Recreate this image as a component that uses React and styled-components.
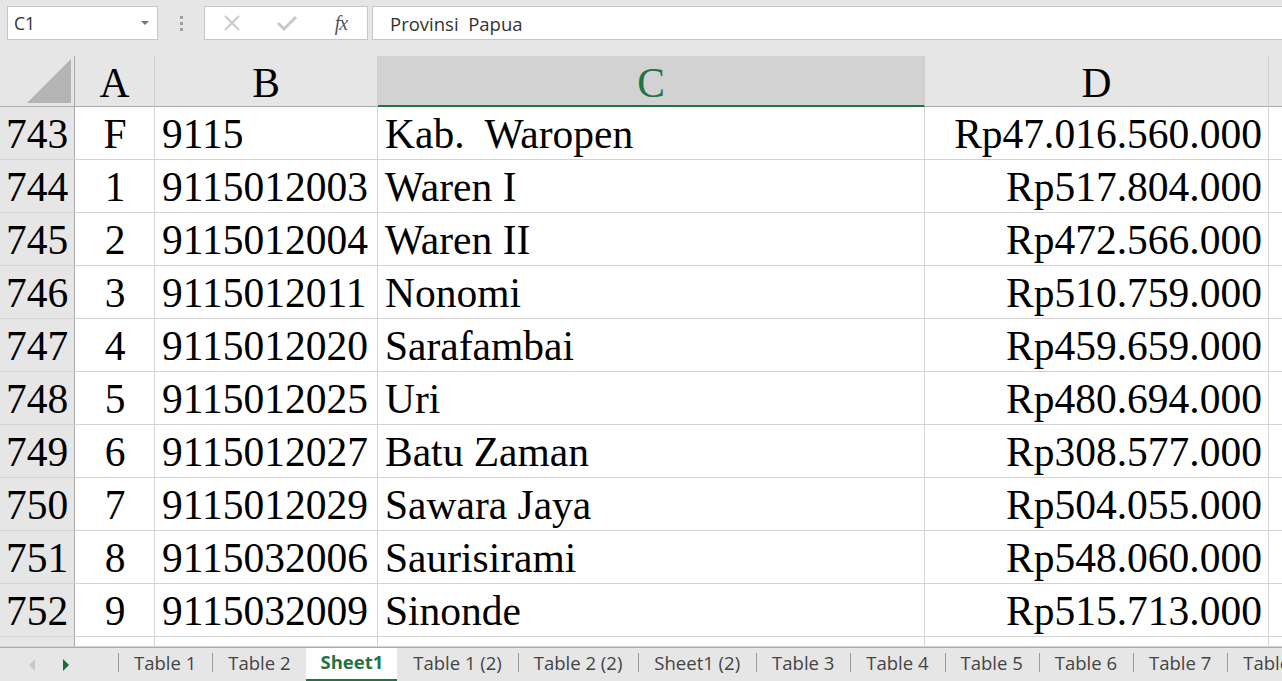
import React from "react";
import styled, { createGlobalStyle } from "styled-components";

const rows = [
  ["743", "F", "9115", "Kab.  Waropen", "Rp47.016.560.000"],
  ["744", "1", "9115012003", "Waren I", "Rp517.804.000"],
  ["745", "2", "9115012004", "Waren II", "Rp472.566.000"],
  ["746", "3", "9115012011", "Nonomi", "Rp510.759.000"],
  ["747", "4", "9115012020", "Sarafambai", "Rp459.659.000"],
  ["748", "5", "9115012025", "Uri", "Rp480.694.000"],
  ["749", "6", "9115012027", "Batu Zaman", "Rp308.577.000"],
  ["750", "7", "9115012029", "Sawara Jaya", "Rp504.055.000"],
  ["751", "8", "9115032006", "Saurisirami", "Rp548.060.000"],
  ["752", "9", "9115032009", "Sinonde", "Rp515.713.000"],
];

const tabs = [
  "Table 1",
  "Table 2",
  "Sheet1",
  "Table 1 (2)",
  "Table 2 (2)",
  "Sheet1 (2)",
  "Table 3",
  "Table 4",
  "Table 5",
  "Table 6",
  "Table 7",
  "Table 8",
];

const GlobalStyle = createGlobalStyle`
  html, body {
    margin: 0;
    padding: 0;
    background: #e6e6e6;
    overflow: hidden;
  }
`;

const Window = styled.div`
  width: 1282px;
  height: 681px;
  display: flex;
  flex-direction: column;
  background: #e6e6e6;
  overflow: hidden;
`;

const FormulaBar = styled.div`
  height: 56px;
  display: flex;
  align-items: flex-start;
  padding: 6px 0 0 7px;
  box-sizing: border-box;
  font-family: "Open Sans", "Noto Sans", sans-serif;
`;

const NameBox = styled.div`
  width: 151px;
  height: 34px;
  box-sizing: border-box;
  background: #fff;
  border: 1px solid #c6c6c6;
  display: flex;
  align-items: center;
  justify-content: space-between;
  padding: 0 8px 0 6px;
  font-size: 17.5px;
  color: #333;
`;

const Caret = styled.span`
  width: 0;
  height: 0;
  border-left: 4px solid transparent;
  border-right: 4px solid transparent;
  border-top: 4px solid #777;
`;

const Grip = styled.div`
  width: 46px;
  height: 34px;
  display: flex;
  flex-direction: column;
  align-items: center;
  justify-content: center;
  gap: 3px;
  & span {
    width: 3px;
    height: 3px;
    background: #a0a0a0;
  }
`;

const IconBox = styled.div`
  width: 164px;
  height: 34px;
  box-sizing: border-box;
  background: #fff;
  border: 1px solid #c6c6c6;
  display: flex;
  align-items: center;
  padding: 0 0 0 16px;
`;

const IconSlot = styled.div`
  width: ${(p) => p.$w}px;
  display: flex;
  align-items: center;
  justify-content: center;
`;

const Fx = styled.span`
  font-family: "Liberation Serif", serif;
  font-style: italic;
  font-size: 20px;
  color: #555;
  letter-spacing: -1px;
`;

const FormulaInput = styled.div`
  flex: 1;
  margin-left: 4px;
  height: 34px;
  box-sizing: border-box;
  background: #fff;
  border: 1px solid #c6c6c6;
  border-right: none;
  display: flex;
  align-items: center;
  padding-left: 17px;
  font-size: 18.5px;
  color: #333;
  white-space: pre;
`;

const Grid = styled.div`
  flex: 1;
  display: grid;
  grid-template-columns: 75px 80px 223px 547px 344px 1fr;
  grid-template-rows: 51px repeat(10, 53px) 1fr;
  background: #fff;
  overflow: hidden;
  font-family: "Liberation Serif", "Times New Roman", serif;
  font-size: 41.5px;
  color: #000;
`;

const Corner = styled.div`
  position: relative;
  background: #e6e6e6;
  border-right: 1px solid #ababab;
  border-bottom: 1px solid #ababab;
  &::after {
    content: "";
    position: absolute;
    right: 3px;
    bottom: 3px;
    width: 0;
    height: 0;
    border-left: 44px solid transparent;
    border-bottom: 44px solid #b4b4b4;
  }
`;

const ColHead = styled.div`
  background: ${(p) => (p.$active ? "#d2d2d2" : "#e6e6e6")};
  color: ${(p) => (p.$active ? "#217346" : "#000")};
  border-right: 1px solid ${(p) => (p.$last ? "transparent" : "#d0d0d0")};
  border-bottom: ${(p) => (p.$active ? "2px solid #217346" : "1px solid #ababab")};
  display: flex;
  align-items: center;
  justify-content: center;
  padding-top: 4px;
  box-sizing: border-box;
`;

const RowHead = styled.div`
  background: #e6e6e6;
  border-right: 1px solid #ababab;
  border-bottom: 1px solid #d4d4d4;
  display: flex;
  align-items: center;
  justify-content: center;
  padding-top: 2px;
  box-sizing: border-box;
`;

const Cell = styled.div`
  border-right: 1px solid #d4d4d4;
  border-bottom: 1px solid #d4d4d4;
  display: flex;
  align-items: center;
  justify-content: ${(p) =>
    p.$align === "center" ? "center" : p.$align === "right" ? "flex-end" : "flex-start"};
  padding: 2px 6px 0 7px;
  box-sizing: border-box;
  white-space: pre;
  overflow: hidden;
`;

const TabBar = styled.div`
  height: 33px;
  flex-shrink: 0;
  border-top: 1px solid #ababab;
  display: flex;
  align-items: stretch;
  font-family: "Open Sans", "Noto Sans", sans-serif;
  font-size: 18.5px;
  color: #444;
  white-space: nowrap;
  overflow: hidden;
`;

const Nav = styled.div`
  width: 118px;
  flex-shrink: 0;
  display: flex;
  align-items: center;
  padding-left: 29px;
  box-sizing: border-box;
  gap: 28px;
`;

const Arrow = styled.span`
  width: 0;
  height: 0;
  border-top: 6px solid transparent;
  border-bottom: 6px solid transparent;
  ${(p) =>
    p.$dir === "left"
      ? "border-right: 6px solid #c8c8c8;"
      : "border-left: 6px solid #1e6b3c;"}
`;

const Tab = styled.div`
  flex-shrink: 0;
  display: flex;
  align-items: center;
  padding: 0 ${(p) => (p.$active ? 14 : 16)}px 3px;
  position: relative;
  background: ${(p) => (p.$active ? "#fff" : "transparent")};
  color: ${(p) => (p.$active ? "#217346" : "#444")};
  font-weight: ${(p) => (p.$active ? 700 : 400)};
  border-bottom: ${(p) => (p.$active ? "2px solid #217346" : "2px solid transparent")};
  margin-top: ${(p) => (p.$active ? "-1px" : "0")};
  box-sizing: border-box;
  &::before {
    content: "";
    position: absolute;
    left: 0;
    top: 5px;
    bottom: 7px;
    width: 1px;
    background: ${(p) => (p.$noSep ? "transparent" : "#9a9a9a")};
  }
`;

const XIcon = () => (
  <svg width="20" height="20" viewBox="0 0 20 20">
    <path d="M3 3L17 17M17 3L3 17" stroke="#c8c8c8" strokeWidth="2" fill="none" />
  </svg>
);

const CheckIcon = () => (
  <svg width="22" height="20" viewBox="0 0 22 20">
    <path d="M2 10L8 16L20 4" stroke="#c8c8c8" strokeWidth="3" fill="none" />
  </svg>
);

export default function App() {
  return (
    <>
      <GlobalStyle />
      <Window>
        <FormulaBar>
          <NameBox>
            C1
            <Caret />
          </NameBox>
          <Grip>
            <span />
            <span />
            <span />
          </Grip>
          <IconBox>
            <IconSlot $w={22}>
              <XIcon />
            </IconSlot>
            <IconSlot $w={87}>
              <CheckIcon />
            </IconSlot>
            <IconSlot $w={22}>
              <Fx>fx</Fx>
            </IconSlot>
          </IconBox>
          <FormulaInput>Provinsi  Papua</FormulaInput>
        </FormulaBar>

        <Grid>
          <Corner />
          <ColHead>A</ColHead>
          <ColHead>B</ColHead>
          <ColHead $active>C</ColHead>
          <ColHead>D</ColHead>
          <ColHead $last />
          {rows.map((r) => (
            <React.Fragment key={r[0]}>
              <RowHead>{r[0]}</RowHead>
              <Cell $align="center">{r[1]}</Cell>
              <Cell>{r[2]}</Cell>
              <Cell>{r[3]}</Cell>
              <Cell $align="right">{r[4]}</Cell>
              <Cell />
            </React.Fragment>
          ))}
          <RowHead />
          <Cell />
          <Cell />
          <Cell />
          <Cell />
          <Cell />
        </Grid>

        <TabBar>
          <Nav>
            <Arrow $dir="left" />
            <Arrow $dir="right" />
          </Nav>
          {tabs.map((t, i) => (
            <Tab key={t} $active={t === "Sheet1"} $noSep={t === "Sheet1" || tabs[i - 1] === "Sheet1"}>
              {t}
            </Tab>
          ))}
        </TabBar>
      </Window>
    </>
  );
}
